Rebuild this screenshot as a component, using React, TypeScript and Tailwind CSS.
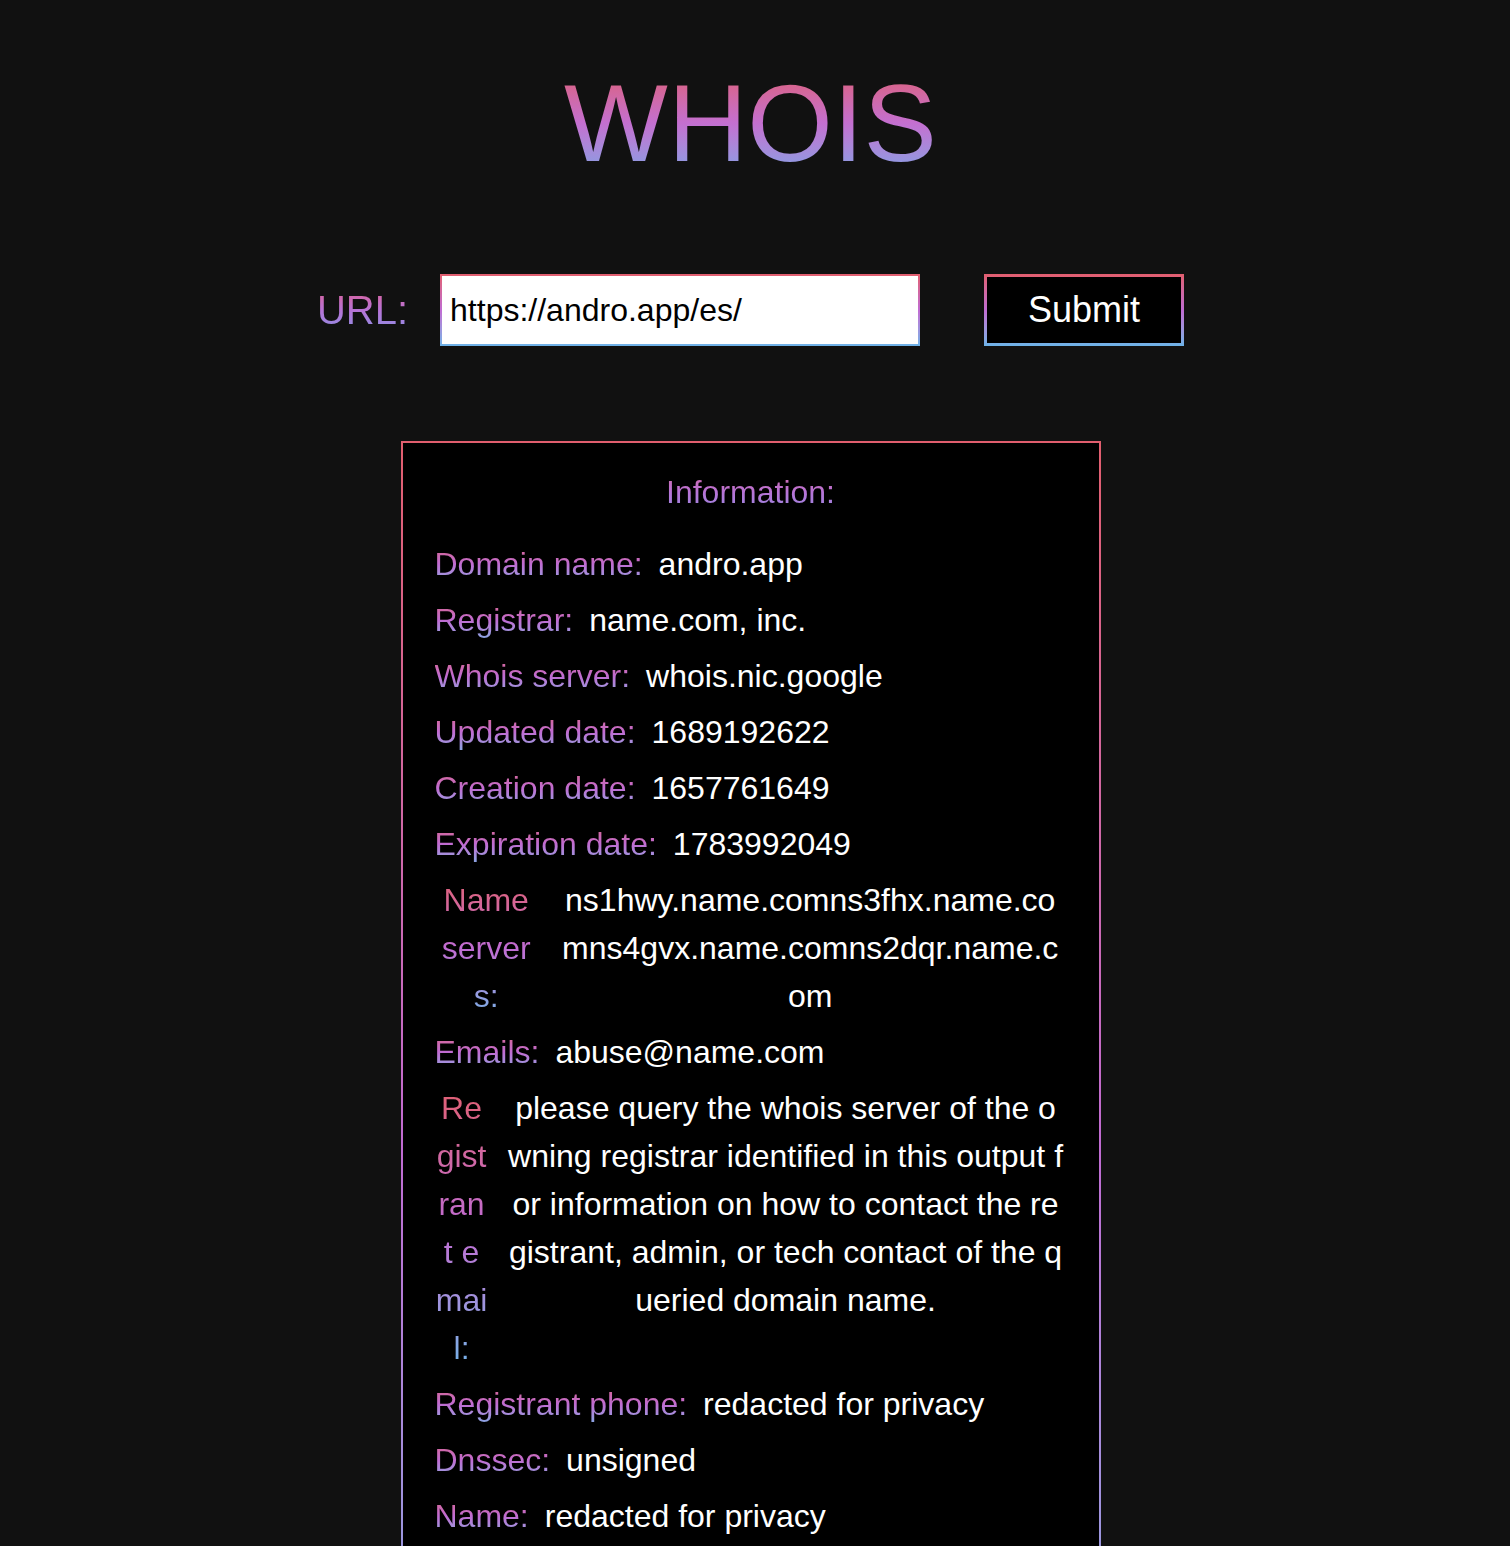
import React from 'react';

const rows: [string, string][] = [
  ['Domain name:', 'andro.app'],
  ['Registrar:', 'name.com, inc.'],
  ['Whois server:', 'whois.nic.google'],
  ['Updated date:', '1689192622'],
  ['Creation date:', '1657761649'],
  ['Expiration date:', '1783992049'],
  ['Name servers:', 'ns1hwy.name.comns3fhx.name.comns4gvx.name.comns2dqr.name.com'],
  ['Emails:', 'abuse@name.com'],
  [
    'Registrant email:',
    'please query the whois server of the owning registrar identified in this output for information on how to contact the registrant, admin, or tech contact of the queried domain name.',
  ],
  ['Registrant phone:', 'redacted for privacy'],
  ['Dnssec:', 'unsigned'],
  ['Name:', 'redacted for privacy'],
  ['Org:', 'redacted for privacy'],
  ['Address:', 'redacted for privacy'],
  ['City:', 'redacted for privacy'],
  ['State:', 'redacted for privacy'],
  ['Country:', 'us'],
];

function InfoRow({ label, value }: { label: string; value: string }) {
  return (
    <div className="flex items-start gap-4 text-[32px] leading-[48px]">
      <span className="break-all text-center bg-linear-to-b from-[#e25e6e] via-[#c06bd2] to-[#6cb3e8] bg-clip-text text-transparent">
        {label}
      </span>
      <span className="break-all text-center text-white">{value}</span>
    </div>
  );
}

export default function App() {
  return (
    <div className="min-h-screen bg-[#111111] pr-[9px] font-['Liberation_Sans',Arial,sans-serif]">
      <div className="pt-[68px] text-center">
        <h1 className="inline-block text-[110px] leading-none font-normal bg-linear-to-b from-[#df5d72] via-[#c46fd0] to-[#78a3e6] bg-clip-text text-transparent">
          WHOIS
        </h1>
      </div>

      <div className="mt-[96px] flex items-center justify-center">
        <label className="text-[40px] leading-none bg-linear-to-b from-[#d9609a] via-[#b773d6] to-[#8f8ce4] bg-clip-text text-transparent">
          URL:
        </label>
        <div className="ml-[32px] w-[480px] bg-linear-to-b from-[#e25e6e] via-[#c06bd2] to-[#6cb3e8] p-[2px]">
          <input
            type="text"
            defaultValue="https://andro.app/es/"
            className="block h-[68px] w-full bg-white px-[8px] text-[32px] text-black outline-none"
          />
        </div>
        <div className="ml-[64px] w-[200px] bg-linear-to-b from-[#e25e6e] via-[#c06bd2] to-[#6cb3e8] p-[3px]">
          <button
            type="button"
            className="block h-[66px] w-full bg-black text-[36px] leading-none text-white"
          >
            Submit
          </button>
        </div>
      </div>

      <div className="mx-auto mt-[95px] w-[700px] bg-linear-to-b from-[#e25e6e] via-[#c06bd2] to-[#6cb3e8] p-[2px]">
        <div className="bg-black px-[32px] pt-[25px] pb-[32px]">
          <div className="mb-6 text-center text-[32px] leading-[48px] bg-linear-to-b from-[#d9609a] via-[#b773d6] to-[#8f8ce4] bg-clip-text text-transparent">
            Information:
          </div>
          <div className="flex flex-col gap-2">
            {rows.map(([label, value]) => (
              <InfoRow key={label} label={label} value={value} />
            ))}
          </div>
        </div>
      </div>
    </div>
  );
}
